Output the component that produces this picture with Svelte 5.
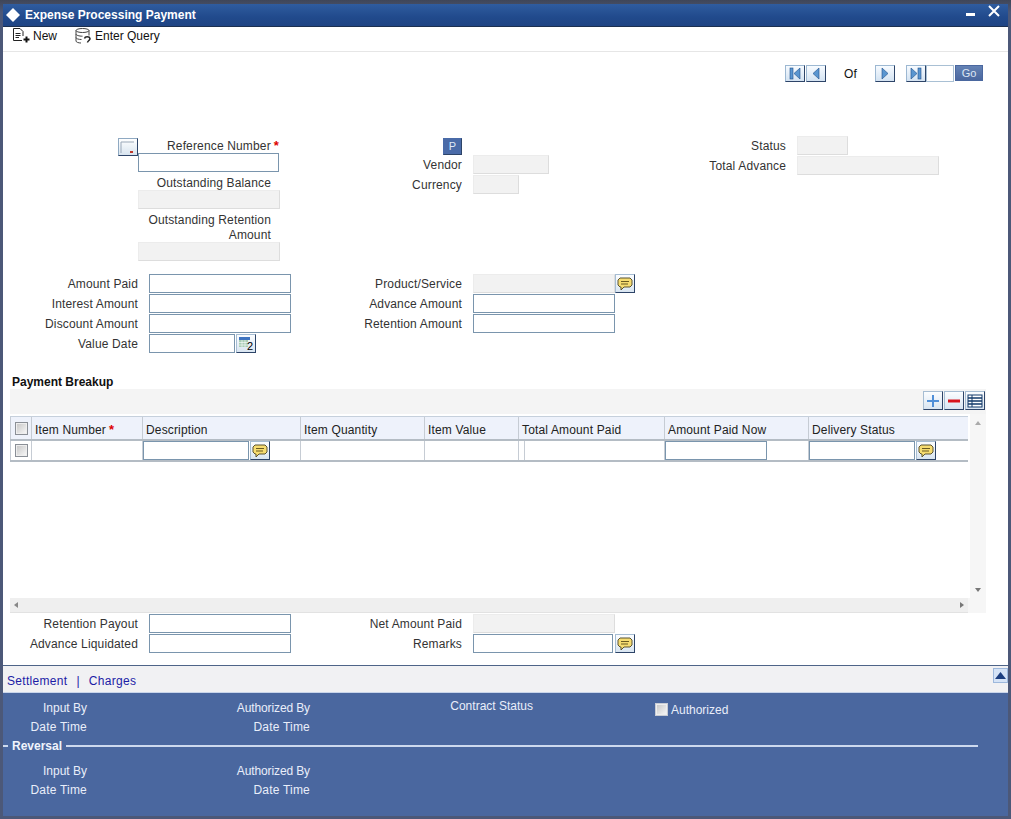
<script>
  const cols = [
    { t: '', w: 21 }, { t: 'Item Number', w: 111, req: true }, { t: 'Description', w: 158 },
    { t: 'Item Quantity', w: 124 }, { t: 'Item Value', w: 94 }, { t: 'Total Amount Paid', w: 146 },
    { t: 'Amount Paid Now', w: 144 }, { t: 'Delivery Status', w: 160 }
  ];
  const tpl = cols.map((c) => c.w + 'px').join(' ');
</script>

{#snippet chat()}
  <button class="ibtn" aria-label="Open text editor">
    <svg width="16" height="14" viewBox="0 0 16 14">
      <path d="M3 1h10l2 2v5l-2 2H7l-3 3V10H3L1 8V3z" fill="#f6dc70" stroke="#5c5430" stroke-width="1"/>
      <path d="M4 4.500h8M4 7h7" stroke="#6a5a20" stroke-width="1"/>
    </svg>
  </button>
{/snippet}

<div class="frame">
  <div class="window">
    <header class="title">
      <svg class="logo" width="16" height="16" viewBox="0 0 16 16"><path d="M8 1l7 7-7 7-7-7z" fill="#fff"/></svg>
      <span>Expense Processing Payment</span>
      <span class="winbtns">
        <svg width="10" height="10" viewBox="0 0 10 10"><rect x="0" y="6" width="9" height="3" fill="#fff"/></svg>
        <svg width="12" height="12" viewBox="0 0 12 12"><path d="M1 1l10 10M11 1L1 11" stroke="#fff" stroke-width="2"/></svg>
      </span>
    </header>

    <div class="toolbar">
      <span class="tool tool-new">
        <svg width="17" height="16" viewBox="0 0 17 16" fill="none" stroke="#222"><path d="M9 12.500H.5V.5H7l3 3V8"/><path d="M2.500 5.500h5M2.500 7.500h5M2.500 9.500h3.500"/><path d="M13.500 8.500v6M10.500 11.500h6" stroke="#111" stroke-width="2"/></svg>
        New
      </span>
      <span class="tool tool-query">
        <svg width="17" height="16" viewBox="0 0 17 16" fill="none" stroke="#444"><ellipse cx="7.500" cy="2.500" rx="6.500" ry="2"/><path d="M1 2.500v10.500c0 1.200 2.500 2 5 2M14 2.500v5M1 6c0 1.200 3 2.200 6.500 2.200M1 9.500c0 1.200 2.500 2 5.500 2"/><path d="M9.500 10.500c.5-2.500 5-2.500 5.500 0 .3 1.800-2.200 2-2.500 4" stroke="#222" stroke-width="1.500"/></svg>
        Enter Query
      </span>
    </div>

    <div class="nav">
      <button class="navbtn" aria-label="First"><svg width="12" height="13" viewBox="0 0 12 13"><rect x="1" y="1" width="3" height="11" fill="#5a96d0" stroke="#1f4f8a" stroke-width=".6"/><path d="M11 1v11L5 6.500z" fill="#5a96d0" stroke="#1f4f8a" stroke-width=".6"/></svg></button>
      <button class="navbtn g1" aria-label="Previous"><svg width="12" height="13" viewBox="0 0 12 13"><path d="M9 1v11L3 6.500z" fill="#5a96d0" stroke="#1f4f8a" stroke-width=".6"/></svg></button>
      <span class="of">Of</span>
      <button class="navbtn" aria-label="Next"><svg width="12" height="13" viewBox="0 0 12 13"><path d="M3 1v11l6-5.500z" fill="#5a96d0" stroke="#1f4f8a" stroke-width=".6"/></svg></button>
      <button class="navbtn g2" aria-label="Last"><svg width="12" height="13" viewBox="0 0 12 13"><path d="M1 1v11l6-5.500z" fill="#5a96d0" stroke="#1f4f8a" stroke-width=".6"/><rect x="8" y="1" width="3" height="11" fill="#5a96d0" stroke="#1f4f8a" stroke-width=".6"/></svg></button>
      <input class="page" aria-label="Page" />
      <button class="go">Go</button>
    </div>

    <section class="upper">
      <div class="c1">
        <div class="refhead">
          <button class="lov" aria-label="Lookup">
            <svg width="16" height="14" viewBox="0 0 16 14"><path d="M1 2h13M1 2v11" stroke="#9aa8b8" fill="none"/><rect x="10" y="11" width="3" height="2" fill="#c0392b"/></svg>
          </button>
          <label class="reflabel" for="ref">Reference Number<b class="req">*</b></label>
        </div>
        <input id="ref" class="inp w141" />
        <div class="sublabel one">Outstanding Balance</div>
        <div class="ro w142"></div>
        <div class="sublabel two">Outstanding Retention<br />Amount</div>
        <div class="ro w142"></div>
      </div>
      <div class="c2">
        <div class="pline"><button class="p">P</button></div>
        <div class="line"><span class="lb l179">Vendor</span><div class="ro w76"></div></div>
        <div class="line"><span class="lb l179">Currency</span><div class="ro w46"></div></div>
      </div>
      <div class="c3">
        <div class="line"><span class="lb l126">Status</span><div class="ro w51"></div></div>
        <div class="line"><span class="lb l126">Total Advance</span><div class="ro w142"></div></div>
      </div>
    </section>

    <section class="pair">
      <span class="lb">Amount Paid</span><input class="inp f" />
      <span class="lb">Product/Service</span><div class="ro f"></div><span class="cell-btn">{@render chat()}</span>
      <span class="lb">Interest Amount</span><input class="inp f" />
      <span class="lb">Advance Amount</span><input class="inp f" /><span></span>
      <span class="lb">Discount Amount</span><input class="inp f" />
      <span class="lb">Retention Amount</span><input class="inp f" /><span></span>
      <span class="lb">Value Date</span>
      <span class="dateline">
        <input class="inp w86" />
        <button class="ibtn cal" aria-label="Calendar">
          <svg width="17" height="15" viewBox="0 0 17 15"><rect x="1" y="1" width="11" height="3" fill="#3f74c0"/><rect x="1" y="4" width="9" height="7" fill="#a9cdb5"/><path d="M1 6.500h9M1 9h9M4 4v7M7 4v7" stroke="#fff" stroke-width=".6"/><text x="9" y="14" font-size="11" font-family="Liberation Sans" fill="#000">2</text></svg>
        </button>
      </span>
    </section>

    <h2 class="heading">Payment Breakup</h2>
    <div class="gridbar">
      <button class="ibtn" aria-label="Add row"><svg width="14" height="14" viewBox="0 0 14 14"><path d="M7 1v12M1 7h12" stroke="#4f8fd8" stroke-width="2"/></svg></button>
      <button class="ibtn" aria-label="Remove row"><svg width="14" height="14" viewBox="0 0 14 14"><path d="M1 7h12" stroke="#d8141c" stroke-width="3"/></svg></button>
      <button class="ibtn" aria-label="Columns"><svg width="16" height="14" viewBox="0 0 16 14"><rect x="1" y="1" width="14" height="12" fill="#fff" stroke="#123a6a"/><path d="M1 4h14M1 7h14M1 10h14" stroke="#123a6a" stroke-width="1.500"/><path d="M5 1v12" stroke="#123a6a"/></svg></button>
    </div>
    <div class="gridarea">
      <div class="gridmain">
        <div class="ghead" style="grid-template-columns:{tpl}">
          {#each cols as c, i}
            <div class="th">
              {#if i === 0}<span class="cb"></span>{:else}{c.t}{#if c.req}<b class="req">*</b>{/if}{/if}
            </div>
          {/each}
        </div>
        <div class="grow" style="grid-template-columns:{tpl}">
          <div class="td"><span class="cb"></span></div>
          <div class="td"></div>
          <div class="td in"><input class="inp w106" />{@render chat()}</div>
          <div class="td"></div>
          <div class="td"></div>
          <div class="td split"><span></span></div>
          <div class="td in"><input class="inp w102" /></div>
          <div class="td in"><input class="inp w106" />{@render chat()}</div>
        </div>
      </div>
      <div class="vscroll">
        <span class="up"></span>
        <span class="down"></span>
      </div>
    </div>
    <div class="hscrollrow">
      <div class="hscroll"><span class="hleft"></span><span class="hright"></span></div>
      <div class="corner"></div>
    </div>

    <section class="pair lower">
      <span class="lb">Retention Payout</span><input class="inp f" />
      <span class="lb">Net Amount Paid</span><div class="ro f"></div><span></span>
      <span class="lb">Advance Liquidated</span><input class="inp f" />
      <span class="lb">Remarks</span><input class="inp f w140" /><span class="cell-btn">{@render chat()}</span>
    </section>

    <nav class="tabs">
      <a href="#s">Settlement</a><span class="sep">|</span><a href="#c">Charges</a>
      <button class="collapse" aria-label="Collapse"><svg width="11" height="7" viewBox="0 0 11 7"><path d="M5.500 0L11 7H0z" fill="#1d3f80"/></svg></button>
    </nav>

    <footer class="audit">
      <div class="agrid">
        <span class="al">Input By</span><span class="al ab">Authorized By</span><span class="al cs">Contract Status</span>
        <span class="auth"><span class="cb light"></span>Authorized</span>
        <span class="al dt">Date Time</span><span class="al dt">Date Time</span><span></span><span></span>
      </div>
      <div class="rev"><i class="dash"></i><b>Reversal</b><i class="rule"></i></div>
      <div class="agrid block2">
        <span class="al">Input By</span><span class="al ab">Authorized By</span><span></span><span></span>
        <span class="al dt">Date Time</span><span class="al dt">Date Time</span><span></span><span></span>
      </div>
    </footer>
  </div>
</div>

<style>
  :global(body) { margin: 0; background: #4c5878; }
  * { box-sizing: border-box; }
  .frame {
    width: 1011px; height: 819px; padding: 4px 3px 3px;
    background: linear-gradient(#3f4658, #4c5878 12px);
    font: 12px/14px "Liberation Sans", Arial, sans-serif; color: #222;
    letter-spacing: .15px;
    overflow: hidden;
  }
  .window { width: 1005px; height: 812px; background: #fff; display: flex; flex-direction: column; }
  button { font: inherit; padding: 0; margin: 0; cursor: pointer; }

  .title {
    height: 23px; flex: none; display: flex; align-items: center; color: #fff; font-weight: bold; letter-spacing: 0;
    background: linear-gradient(#2f5c9f, #214a8c 60%, #1f4484);
    border-bottom: 1px solid #1c3050; padding-left: 2px;
  }
  .logo { margin-right: 4px; }
  .winbtns { margin-left: auto; display: flex; align-items: flex-end; gap: 12px; padding: 0 8px 8px 0; }

  .toolbar { height: 25px; flex: none; display: flex; align-items: center; border-bottom: 1px solid #e6e6e6; color: #111; padding-bottom: 6px; letter-spacing: 0; }
  .tool { display: flex; align-items: center; gap: 3px; }
  .tool-new { margin-left: 10px; }
  .tool-query { margin-left: 18px; gap: 3px; }

  .nav { margin-top: 13px; height: 17px; flex: none; display: flex; justify-content: flex-end; align-items: flex-start; padding-right: 25px; }
  .navbtn {
    width: 20px; height: 17px; display: flex; align-items: center; justify-content: center;
    background: linear-gradient(#f7fbff, #d4e3f2);
    border: 1px solid; border-color: #9db8d2 #2d4468 #2d4468 #9db8d2;
  }
  .g1 { margin-left: 1px; }
  .of { margin: 2px 18px 0 18px; color: #111; width: 13px; }
  .g2 { margin-left: 11px; }
  .page { width: 28px; height: 17px; border: 1px solid #a9c0d4; padding: 0; background: #fff; }
  .go {
    width: 28px; height: 16px; margin-left: 1px; color: #dde6f4; font-size: 11px; line-height: 14px;
    background: linear-gradient(#6482b4, #4a679f); border: 1px solid #4a679f;
  }

  .upper { margin-top: 54px; height: 125px; flex: none; display: flex; }
  .c1 { width: 280px; padding: 2px 0 0 135px; }
  .refhead { display: flex; height: 15px; position: relative; }
  .lov {
    position: absolute; left: -20px; top: 0; width: 20px; height: 18px; display: flex; align-items: center; justify-content: center;
    background: linear-gradient(#fff, #d8e4ef); border: 1px solid; border-color: #8fa9c2 #2d4468 #2d4468 #8fa9c2;
  }
  .reflabel { flex: 1; text-align: right; padding: 1px 4px 0 0; white-space: nowrap; color: #333; }
  .req { color: #d00; font-weight: bold; margin-left: 3px; font-size: 13px; }
  .inp { display: block; height: 19px; border: 1px solid #7a95ad; background: #fff; padding: 0; margin: 0; }
  .ro { height: 19px; background: #f2f2f2; border: 1px solid #ececec; border-bottom-color: #ddd; border-right-color: #ddd; flex: none; }
  .w141 { width: 141px; }
  .w142 { width: 142px; }
  .w76 { width: 76px; }
  .w46 { width: 46px; }
  .w51 { width: 51px; }
  .w86 { width: 86px; }
  .w106 { width: 106px; flex: none; }
  .w102 { width: 102px; flex: none; }
  .sublabel { width: 133px; text-align: right; color: #333; white-space: nowrap; }
  .sublabel.one { height: 18px; padding-top: 4px; }
  .sublabel.two { height: 33px; padding-top: 4px; line-height: 15px; }

  .c2 { width: 377px; padding-top: 2px; }
  .pline { height: 17px; padding-left: 160px; }
  .p {
    width: 19px; height: 17px; display: block; background: #4a6ba8; color: #dfe8f6; font-size: 11px; line-height: 15px;
    border: 1px solid #4a6ba8; border-right-color: #2d4468; border-bottom-color: #2d4468;
  }
  .line { display: flex; align-items: center; height: 19px; margin-bottom: 1px; }
  .lb { text-align: right; color: #333; white-space: nowrap; align-self: center; }
  .l179 { width: 179px; margin-right: 11px; }
  .l126 { width: 126px; margin-right: 11px; }
  .c3 { flex: 1; }

  .pair {
    margin-top: 13px; flex: none; display: grid;
    grid-template-columns: 135px 153px 171px 153px 20px; grid-auto-rows: 19px; row-gap: 1px;
  }
  .f { margin-left: 11px; width: 142px; }
  .w140 { width: 140px; }
  .cell-btn { display: flex; }
  .dateline { margin-left: 11px; display: flex; gap: 1px; }
  .ibtn {
    width: 20px; height: 19px; flex: none; display: inline-flex; align-items: center; justify-content: center;
    background: linear-gradient(#fbfdff, #d9e5f1);
    border: 1px solid; border-color: #a6bdd3 #2d4468 #2d4468 #a6bdd3;
  }

  .heading { margin: 22px 0 0 9px; height: 14px; font-size: 12px; line-height: 14px; font-weight: bold; color: #111; flex: none; letter-spacing: 0; }
  .gridbar {
    margin-left: 7px; width: 976px; height: 25px; flex: none; background: #f4f4f4;
    display: flex; justify-content: flex-end; align-items: flex-start; padding: 2px 1px 0 0; gap: 1px;
  }
  .gridarea { margin-left: 7px; width: 976px; height: 184px; flex: none; display: flex; }
  .gridmain { width: 958px; padding-top: 2px; overflow: hidden; }
  .ghead, .grow { display: grid; }
  .ghead { height: 25px; background: #eef2fb; border-top: 1px solid #c6d0dc; border-bottom: 2px solid #b4bcc4; }
  .th { padding: 3px 0 0 3px; display: flex; align-items: center; border-left: 1px solid #c6ccd4; color: #222; white-space: nowrap; }
  .th:first-child { padding-left: 4px; padding-top: 0; }
  .grow { height: 21px; border-bottom: 2px solid #b4bcc4; }
  .td { border-left: 1px solid #c6ccd4; display: flex; align-items: center; gap: 1px; }
  .td:first-child { padding-left: 4px; }
  .td.split span { display: block; height: 100%; width: 6px; border-right: 1px solid #c6ccd4; }
  .cb {
    display: inline-block; width: 13px; height: 13px; flex: none;
    background: linear-gradient(135deg, #c4c4c4, #fafafa); border: 1px solid #8a8f96;
    box-shadow: inset 0 0 0 1px #eee;
  }
  .cb.light { border-color: #c8ccd4; margin-right: 3px; }
  .vscroll {
    margin-left: 2px; width: 16px; background: #f6f6f6; display: flex; flex-direction: column;
    justify-content: space-between; align-items: center; padding: 7px 0 6px;
  }
  .up { border: 3.500px solid transparent; border-top: 0; border-bottom: 4px solid #aaa; }
  .down { border: 3.500px solid transparent; border-bottom: 0; border-top: 4px solid #777; }
  .hscrollrow { margin-left: 7px; width: 976px; height: 15px; flex: none; display: flex; }
  .hscroll { width: 958px; background: #efefef; border-bottom: 1px solid #e2e2e2; display: flex; justify-content: space-between; align-items: center; padding: 0 4px 0 4px; }
  .hleft { border: 3.500px solid transparent; border-left: 0; border-right: 4px solid #888; }
  .hright { border: 3.500px solid transparent; border-right: 0; border-left: 4px solid #777; }
  .corner { flex: 1; background: #f6f6f6; }

  .lower { margin-top: 1px; }

  .tabs {
    margin-top: 12px; height: 27px; flex: none; position: relative; display: flex; align-items: center;
    background: #f1f1f3; border-top: 1px solid #4e6488; padding: 4px 0 0 4px; letter-spacing: .3px;
  }
  .tabs a { color: #1c1ca6; text-decoration: none; }
  .sep { margin: 0 9px; color: #1c1ca6; }
  .collapse {
    position: absolute; right: 0; top: 2px; width: 15px; height: 15px;
    display: flex; align-items: center; justify-content: center; background: #d5e3f6; border: 1px solid #9db8dc;
  }

  .audit {
    flex: 1; background: #4a679f; border-top: 1px solid #c9d5ea; color: #e9eefa;
    padding-top: 5px; letter-spacing: 0;
  }
  .agrid { display: grid; grid-template-columns: 84px 223px 223px 1fr; grid-auto-rows: 19px; align-items: center; }
  .al { text-align: right; white-space: nowrap; }
  .ab { letter-spacing: -.12px; }
  .dt { letter-spacing: .2px; }
  .cs { align-self: start; margin-top: 1px; }
  .auth { display: flex; align-items: center; margin-left: 122px; padding-top: 4px; }
  .rev { display: flex; align-items: center; height: 16px; margin: 2px 0 0; }
  .rev b { margin: 0 4px; color: #f0f4fc; }
  .dash { width: 5px; height: 2px; background: #cdd9ee; }
  .rule { width: 912px; height: 2px; background: #cdd9ee; margin-top: -1px; }
  .block2 { margin-top: 7px; }
</style>
